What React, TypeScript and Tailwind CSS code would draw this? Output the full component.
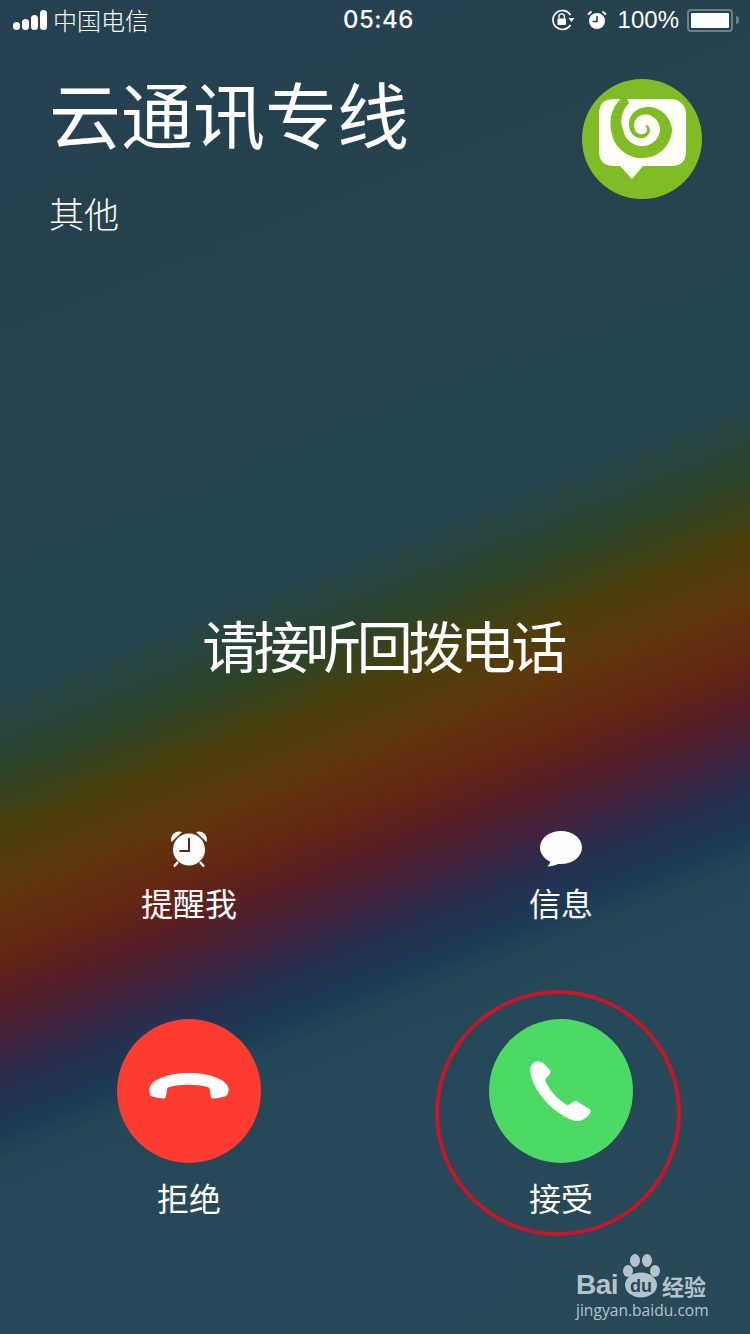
const cjk = "font-['Noto_Sans_CJK_SC','Liberation_Sans',sans-serif]";

function Signal() {
  return (
    <div className="flex items-end gap-[2px] h-[20px]">
      <span className="w-[7px] h-[8px] rounded-full bg-white" />
      <span className="w-[7px] h-[11px] rounded-full bg-white" />
      <span className="w-[7px] h-[15px] rounded-full bg-white" />
      <span className="w-[7px] h-[20px] rounded-full bg-white" />
    </div>
  );
}

function RotationLock() {
  return (
    <svg width="24" height="22" viewBox="0 0 24 22" fill="none">
      <path d="M19.500 6A9.500 9.500 0 1 0 19.500 16" stroke="#fff" strokeWidth="1.6" />
      <path d="M17.500 9h6l-3 4z" fill="#fff" />
      <rect x="6.500" y="9.500" width="8.500" height="6.500" rx="1" fill="#fff" />
      <path d="M8 9.500V7.600a2.700 2.700 0 0 1 5.400 0v1.900" stroke="#fff" strokeWidth="1.400" />
    </svg>
  );
}

function StatusAlarm() {
  return (
    <svg width="20" height="20" viewBox="0 0 20 20" fill="none">
      <circle cx="10" cy="11" r="8" fill="#fff" />
      <path d="M1 4.500 4.500 1.500M19 4.500 15.500 1.500" stroke="#fff" strokeWidth="2" />
      <path d="M10 6v5.500H5.500" stroke="#25404f" strokeWidth="1.600" />
    </svg>
  );
}

function Alarm() {
  return (
    <svg width="38" height="38" viewBox="0 0 38 38" fill="none">
      <circle cx="19" cy="19.500" r="16" fill="#fff" />
      <path d="M1.500 12C-.5 5.500 5.500-.5 12 2z" fill="#fff" />
      <path d="M36.500 12c2-6.500-4-12.500-10.500-10z" fill="#fff" />
      <path d="M8 32l-4 4.500M30 32l4 4.500" stroke="#fff" strokeWidth="2.400" />
      <path d="M19 8V21H9.500" stroke="#5c2420" strokeWidth="2" />
    </svg>
  );
}

function Bubble() {
  return (
    <svg width="42" height="36" viewBox="0 0 42 36">
      <ellipse cx="21" cy="16.500" rx="21" ry="16.500" fill="#fff" />
      <path d="M11 27c0 3-1.500 6.500-3.500 8.500 4.500 0 9-1.500 12-3.500z" fill="#fff" />
    </svg>
  );
}

function HangUp() {
  return (
    <svg width="80" height="26" viewBox="0 0 80 26" className="-mt-[10px]">
      <path
        d="M.5 15C3 6 20 0 40 0s37 6 39.500 15c.6 2.500-.5 7-2.500 8-1.500.8-9 2.300-12 2.500-2 .1-3-1-3.200-2.600l-1-6.300c-.2-1.500-1-2.200-2.500-2.600-5-1.400-11-2.200-18.800-2.200s-14 .8-19 2.200c-1.500.4-2.300 1.100-2.500 2.600l-1 6.300c-.2 1.600-1.200 2.700-3.200 2.600-3-.2-10.500-1.700-12-2.500C1 22 0 17.500.5 15z"
        fill="#fff"
      />
    </svg>
  );
}

function Phone() {
  return (
    <svg width="62" height="62" viewBox="0 0 64 64">
      <path
        d="M9 1.500 C7 .5 4.500 2 3 3.500 .5 6 0 9 .5 13c1 9 7 20 15 29 8 9 19 16.500 28 20 3.500 1.300 7 1.500 10.500 0 3.500-1.500 8-5.500 8.500-8.500.3-1.500-.5-2.500-2-3.500l-11.500-7c-1.500-.9-3-.8-4.500.2l-4 2.800c-1 .7-2 .7-3 .1-4-2.500-9-6.500-13-11-3.500-4-7-9.500-8.500-13.500-.4-1-.2-2 .6-2.800l3.400-3.600c1.200-1.300 1.500-2.800.8-4.500L14.500 4c-.8-1.500-3.500-2-5.500-2.500z"
        fill="#fff"
      />
    </svg>
  );
}

// spiral mark: radius and width shrink towards the centre
const lerp = (stops: number[][], t: number) => {
  for (let i = 1; i < stops.length; i++) {
    if (t <= stops[i][0]) {
      const k = (t - stops[i - 1][0]) / (stops[i][0] - stops[i - 1][0]);
      return stops[i - 1][1] + (stops[i][1] - stops[i - 1][1]) * k;
    }
  }
  return stops[stops.length - 1][1];
};

function spiralPath() {
  const rs = [[0, 33], [0.1, 26], [0.24, 24], [0.375, 23], [0.515, 17], [0.655, 11], [0.8, 8], [1, 4]];
  const ws = [[0, 9], [0.1, 12], [0.375, 12], [0.515, 7], [0.655, 5], [1, 2]];
  const outer: string[] = [];
  const inner: string[] = [];
  for (let i = 0; i <= 80; i++) {
    const t = i / 80;
    const a = ((241 - 641 * t) * Math.PI) / 180;
    const r = lerp(rs, t);
    const w = lerp(ws, t) / 2;
    outer.push(`${(61 + (r + w) * Math.cos(a)).toFixed(1)} ${(49 + (r + w) * Math.sin(a)).toFixed(1)}`);
    inner.unshift(`${(61 + (r - w) * Math.cos(a)).toFixed(1)} ${(49 + (r - w) * Math.sin(a)).toFixed(1)}`);
  }
  return `M${outer.concat(inner).join("L")}Z`;
}

function AppLogo() {
  return (
    <svg width="120" height="120" viewBox="0 0 120 120">
      <circle cx="60" cy="60" r="60" fill="#7fbc26" />
      <path
        d="M32 20h56c10 0 16 6 16 16v36c0 10-5 15-15 15H61L50 100 38 87h-6c-10 0-15-5-15-15V35c0-10 5-15 15-15z"
        fill="#fffff8"
      />
      <path d={spiralPath()} fill="#7fbc26" />
    </svg>
  );
}

function Action({ icon, label }: { icon: React.ReactNode; label: string }) {
  return (
    <div className="flex flex-col items-center w-[144px]">
      <div className="h-[38px] flex items-center justify-center">{icon}</div>
      <div className="text-[32px] leading-[40px] mt-[14px] text-white">{label}</div>
    </div>
  );
}

function CallButton({ color, icon, label }: { color: string; icon: React.ReactNode; label: string }) {
  return (
    <div className="flex flex-col items-center w-[144px]">
      <div className={`w-[144px] h-[144px] rounded-full flex items-center justify-center ${color}`}>{icon}</div>
      <div className="text-[32px] leading-[40px] mt-[14px] text-white">{label}</div>
    </div>
  );
}

function Watermark() {
  return (
    <div className="absolute left-[576px] top-[1254px] w-[140px] text-[#b5c4cc]">
      <div className="flex items-end h-[44px]">
        <span className="font-['Liberation_Sans',sans-serif] font-bold text-[28px] leading-[26px] tracking-[-0.5px] w-[46px]">Bai</span>
        <svg width="38" height="44" viewBox="0 0 38 44">
          <ellipse cx="6" cy="17" rx="5" ry="6" fill="#b5c4cc" />
          <ellipse cx="13" cy="6.500" rx="5" ry="6.500" fill="#b5c4cc" />
          <ellipse cx="25" cy="6.500" rx="5" ry="6.500" fill="#b5c4cc" />
          <ellipse cx="33" cy="17" rx="5" ry="6" fill="#b5c4cc" />
          <ellipse cx="19" cy="31" rx="16" ry="12.500" fill="#b5c4cc" />
          <text x="19" y="38" textAnchor="middle" fontSize="18" fontWeight="700" fontFamily="Liberation Sans" fill="#24495a">du</text>
        </svg>
        <span className="text-[22px] leading-[26px] font-bold ml-[2px]">经验</span>
      </div>
      <div className="font-['Open_Sans',sans-serif] text-[15.6px] leading-[20px] mt-[2px] w-[140px] whitespace-nowrap">jingyan.baidu.com</div>
    </div>
  );
}

export default function App() {
  return (
    <div
      className={`relative w-[750px] h-[1334px] overflow-hidden text-white ${cjk} bg-[linear-gradient(158.4deg,#25404f_0%,#27454f_42.5%,#2c4428_47.5%,#4a400c_51%,#5e380c_54.5%,#652810_58%,#5a1f24_61%,#42233f_64%,#283050_66.6%,#1b3a55_69.2%,#254858_71.6%,#284958_100%)]`}
    >
      <div className="flex items-center h-[40px] pl-[13px] pr-[11px]">
        <div className="flex items-center gap-[6px] w-[330px]">
          <Signal />
          <span className="text-[24px] leading-none font-light">中国电信</span>
        </div>
        <span className="font-['Inter',sans-serif] font-medium text-[24px] tracking-[0.5px]">05:46</span>
        <div className="flex items-center ml-auto">
          <RotationLock />
          <span className="ml-[12px]"><StatusAlarm /></span>
          <span className="font-['Liberation_Sans',sans-serif] text-[24px] ml-[11px]">100%</span>
          <div className="flex items-center ml-[8px]">
            <div className="w-[46px] h-[23px] rounded-[4px] border-2 border-[#6c808c] p-[2px]">
              <div className="w-full h-full bg-white rounded-[1px]" />
            </div>
            <span className="w-[3px] h-[8px] rounded-r-full bg-[#6c808c] ml-[3px]" />
          </div>
        </div>
      </div>

      <div className="flex items-start justify-between pl-[49px] pr-[48px] mt-[36px]">
        <div className="flex flex-col">
          <h1 className="text-[72px] leading-[72px] font-normal">云通讯专线</h1>
          <div className="text-[35px] leading-[44px] mt-[43px] font-light">其他</div>
        </div>
        <div className="mt-[3px]"><AppLogo /></div>
      </div>

      <div className="text-center text-[56px] leading-[70px] mt-[374px] pl-[15px] tracking-[-4.500px]">请接听回拨电话</div>

      <div className="flex justify-between px-[117px] mt-[151px]">
        <Action icon={<Alarm />} label="提醒我" />
        <Action icon={<Bubble />} label="信息" />
      </div>

      <div className="flex justify-between px-[117px] mt-[97px]">
        <CallButton color="bg-[#fd3b30]" icon={<HangUp />} label="拒绝" />
        <CallButton color="bg-[#4cd964]" icon={<Phone />} label="接受" />
      </div>

      <div className="absolute left-[435px] top-[990px] w-[246px] h-[246px] rounded-full border-4 border-[#c5162c]" />
      <Watermark />
    </div>
  );
}
